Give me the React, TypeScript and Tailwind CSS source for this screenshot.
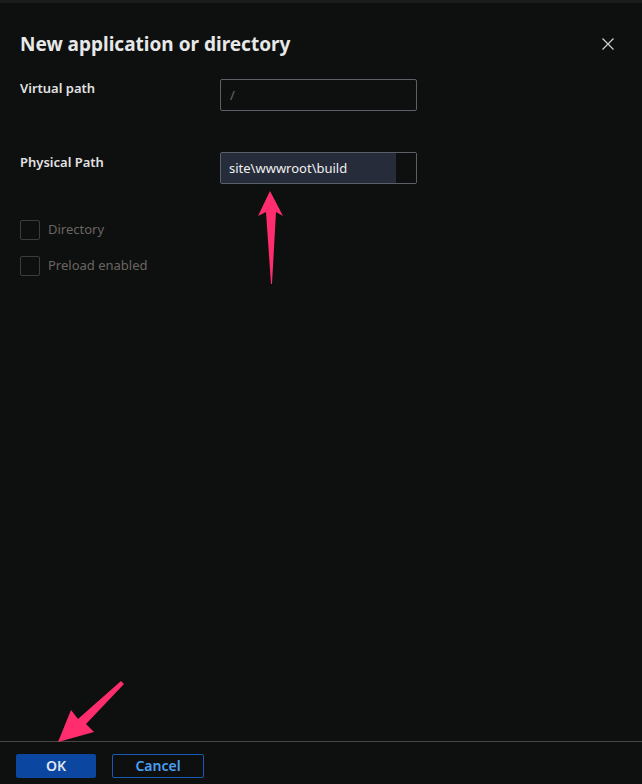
import React, { useState } from 'react';

const font = { fontFamily: '"Noto Sans", "Open Sans", sans-serif' };

const CheckRow: React.FC<{ label: string }> = ({ label }) => {
  const [checked, setChecked] = useState(false);
  return (
    <label className="flex items-center gap-2 h-5 cursor-default">
      <span
        onClick={() => setChecked(!checked)}
        className="w-5 h-5 border border-[#3c3c3c] rounded-[2px] bg-transparent"
      />
      <span className="text-[13px] text-[#6b6560]">{label}</span>
    </label>
  );
};

const PinkArrowUp = () => (
  <svg width="30" height="100" viewBox="0 0 30 100" className="block">
    <path d="M13 4 L26 29 L19 25 L15 97 L14 97 L9 25 L1 29 Z" fill="#ff2d6e" />
  </svg>
);

const PinkArrowDownLeft = () => (
  <svg width="70" height="70" viewBox="0 0 70 70" className="block">
    <path d="M65 4 L68 7 L30 47 L38 55 L2 65 L15 33 L22 42 Z" fill="#ff2d6e" />
  </svg>
);

const App: React.FC = () => {
  const [virtualPath, setVirtualPath] = useState('');
  const [physicalPath, setPhysicalPath] = useState('site\\wwwroot\\build');

  return (
    <div className="w-[642px] h-[784px] bg-[#0e1010] text-[#e6e6e6] flex flex-col overflow-hidden" style={font}>
      <div className="h-[3px] bg-[#1a1c1c]" />

      <div className="flex items-start justify-between pl-5 pr-7 pt-[27px]">
        <h2 className="text-[19px] font-bold leading-[28px] text-[#e8e8e8]">New application or directory</h2>
        <button className="mt-[8px] text-[#d0d0d0]">
          <svg width="12" height="12" viewBox="0 0 12 12">
            <path d="M0.5 0.5 L11.5 11.5 M11.5 0.5 L0.5 11.5" stroke="currentColor" strokeWidth="1.2" />
          </svg>
        </button>
      </div>

      <div className="flex-1 px-5 pt-[21px]">
        <div className="flex">
          <div className="w-[200px] text-[13px] font-semibold leading-5 text-[#e2e2e2] -mt-[1px]">Virtual path</div>
          <input
            value={virtualPath}
            onChange={e => setVirtualPath(e.target.value)}
            placeholder="/"
            className="w-[197px] h-[32px] border border-[#5b6166] rounded-[2px] bg-transparent px-[9px] text-[13px] text-[#e6e6e6] placeholder:text-[#6a6a6a] outline-none"
          />
        </div>

        <div className="flex mt-[41px]">
          <div className="w-[200px] text-[13px] font-semibold leading-5 text-[#e2e2e2] pt-0">Physical Path</div>
          <div className="relative">
            <div className="w-[197px] h-[32px] border border-[#5b6166] rounded-[2px] flex overflow-hidden">
              <input
                value={physicalPath}
                onChange={e => setPhysicalPath(e.target.value)}
                className="w-[175px] h-full bg-[#262c3a] px-[8px] text-[13px] text-[#f0f0f0] outline-none"
              />
              <div className="flex-1 bg-[#0e1010]" />
            </div>
            <div className="absolute left-[37px] top-[35px]">
              <PinkArrowUp />
            </div>
          </div>
        </div>

        <div className="mt-[36px] flex flex-col gap-4">
          <CheckRow label="Directory" />
          <CheckRow label="Preload enabled" />
        </div>
      </div>

      <div className="relative border-t border-[#474747] h-[43px] flex items-start gap-4 px-4 pt-[12px]">
        <div className="absolute left-[56px] top-[-65px]">
          <PinkArrowDownLeft />
        </div>
        <button className="w-[80px] h-[24px] rounded-[2px] bg-[#0b47a1] text-[14px] font-semibold leading-[24px] text-[#dfe6f0]">
          OK
        </button>
        <button className="w-[92px] h-[24px] rounded-[2px] border border-[#1a5ab4] text-[14px] font-semibold leading-[22px] text-[#4aa0f5]">
          Cancel
        </button>
      </div>
    </div>
  );
};

export default App;
